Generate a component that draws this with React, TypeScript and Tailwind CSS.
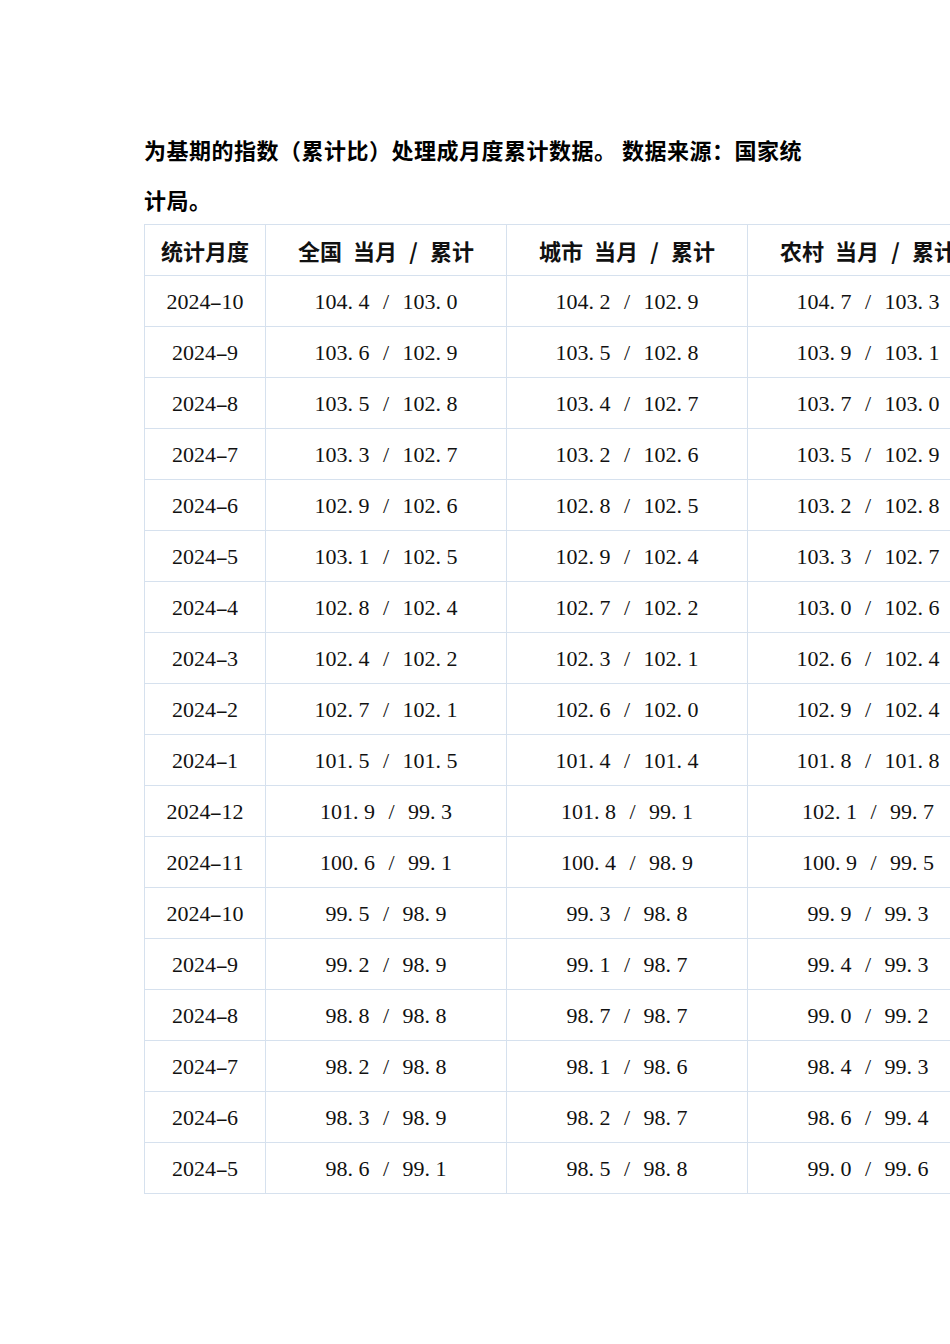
import type { ReactNode } from 'react'

type Row = [string, string, string, string]

const rows: Row[] = [
  ['2024-10', '104.4 / 103.0', '104.2 / 102.9', '104.7 / 103.3'],
  ['2024-9', '103.6 / 102.9', '103.5 / 102.8', '103.9 / 103.1'],
  ['2024-8', '103.5 / 102.8', '103.4 / 102.7', '103.7 / 103.0'],
  ['2024-7', '103.3 / 102.7', '103.2 / 102.6', '103.5 / 102.9'],
  ['2024-6', '102.9 / 102.6', '102.8 / 102.5', '103.2 / 102.8'],
  ['2024-5', '103.1 / 102.5', '102.9 / 102.4', '103.3 / 102.7'],
  ['2024-4', '102.8 / 102.4', '102.7 / 102.2', '103.0 / 102.6'],
  ['2024-3', '102.4 / 102.2', '102.3 / 102.1', '102.6 / 102.4'],
  ['2024-2', '102.7 / 102.1', '102.6 / 102.0', '102.9 / 102.4'],
  ['2024-1', '101.5 / 101.5', '101.4 / 101.4', '101.8 / 101.8'],
  ['2024-12', '101.9 / 99.3', '101.8 / 99.1', '102.1 / 99.7'],
  ['2024-11', '100.6 / 99.1', '100.4 / 98.9', '100.9 / 99.5'],
  ['2024-10', '99.5 / 98.9', '99.3 / 98.8', '99.9 / 99.3'],
  ['2024-9', '99.2 / 98.9', '99.1 / 98.7', '99.4 / 99.3'],
  ['2024-8', '98.8 / 98.8', '98.7 / 98.7', '99.0 / 99.2'],
  ['2024-7', '98.2 / 98.8', '98.1 / 98.6', '98.4 / 99.3'],
  ['2024-6', '98.3 / 98.9', '98.2 / 98.7', '98.6 / 99.4'],
  ['2024-5', '98.6 / 99.1', '98.5 / 98.8', '99.0 / 99.6'],
]

const headers = ['统计月度', '全国 当月 / 累计', '城市 当月 / 累计', '农村 当月 / 累计']

// ASCII gets a half-width cell, like the original SimSun/SimHei rendering
function half(text: string): ReactNode[] {
  return Array.from(text).map((ch, i) => {
    if (ch.charCodeAt(0) < 128) {
      if (ch === '-') {
        return (
          <span key={i} className="inline-block w-[0.5em] text-center">
            <span className="inline-block scale-x-[1.7]">-</span>
          </span>
        )
      }
      return (
        <span key={i} className={`inline-block w-[0.5em] ${ch === '.' ? 'text-left' : 'text-center'}`}>
          {ch === ' ' ? '\u00a0' : ch}
        </span>
      )
    }
    return <span key={i}>{ch}</span>
  })
}

const cell = 'h-[51px] border border-[#d6e1ee] text-center align-middle p-0 whitespace-nowrap'

export default function App() {
  return (
    <div className="w-full min-h-[1344px] overflow-hidden bg-white">
      <div className="pl-[144px] pt-[124px]">
        <p className="w-[672px] text-[22px] leading-[50px] tracking-[0.5px] font-bold text-black font-['Noto_Sans_CJK_SC',sans-serif]">
          为基期的指数（累计比）处理成月度累计数据。 数据来源：国家统计局。
        </p>

        <table className="border-collapse table-fixed w-[844px]">
          <colgroup>
            <col className="w-[121px]" />
            <col className="w-[241px]" />
            <col className="w-[241px]" />
            <col className="w-[241px]" />
          </colgroup>
          <thead>
            <tr>
              {headers.map((h) => (
                <th key={h} className={`${cell} text-[22px] font-bold text-[#111] font-['Noto_Sans_CJK_SC',sans-serif]`}>
                  {half(h)}
                </th>
              ))}
            </tr>
          </thead>
          <tbody>
            {rows.map((r, i) => (
              <tr key={i}>
                {r.map((v, j) => (
                  <td key={j} className={`${cell} text-[22px] text-[#111] font-['Liberation_Serif','Noto_Sans_CJK_SC',serif]`}>
                    {half(v)}
                  </td>
                ))}
              </tr>
            ))}
          </tbody>
        </table>
      </div>
    </div>
  )
}
